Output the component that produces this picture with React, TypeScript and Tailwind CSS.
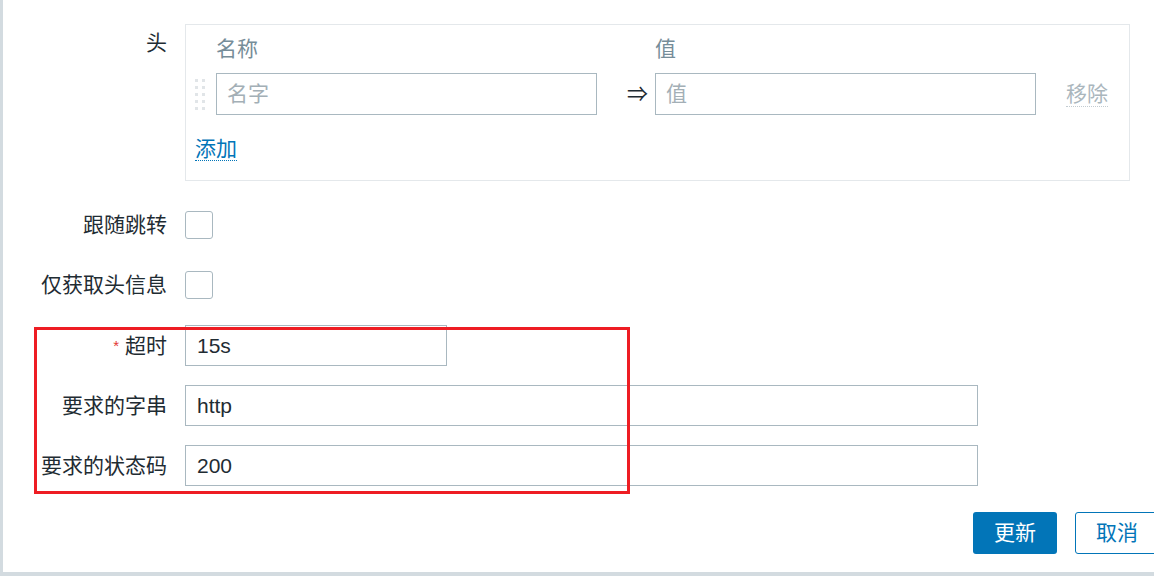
const font = { fontFamily: '"Liberation Sans", "Noto Sans CJK SC", sans-serif' };

function Label({ children, required }: { children: React.ReactNode; required?: boolean }) {
  return (
    <div className="w-[164px] shrink-0 text-right leading-[24px] text-[#1f2c33]">
      {required && <span className="mr-[6px] align-top text-[15px] text-[#e33734]">*</span>}
      {children}
    </div>
  );
}

function TextInput({ value, width }: { value: string; width: string }) {
  return (
    <div className={`${width} flex h-[41px] items-center border border-[#a9b8c0] bg-white px-[11px] text-[#1f2c33]`}>
      {value}
    </div>
  );
}

function Checkbox() {
  return <div className="h-[28px] w-[28px] rounded-[3px] border border-[#a9b8c0] bg-white" />;
}

function DragHandle() {
  return (
    <div className="grid w-[21px] grid-cols-2 content-center gap-x-[3px] gap-y-[4px] pr-[10px]">
      {Array.from({ length: 10 }).map((_, i) => (
        <div key={i} className="h-[3px] w-[3px] bg-[#e1e5e8]" />
      ))}
    </div>
  );
}

export default function App() {
  return (
    <div className="h-[576px] w-[1154px] overflow-hidden bg-[#d3dbe0] pb-[4px] pl-[3px]" style={font}>
      <div className="relative h-full bg-white pt-[24px] text-[21px]">
        {/* headers */}
        <div className="flex">
          <div className="pt-[7px]">
            <Label>头</Label>
          </div>
          <div className="ml-[18px] h-[157px] w-[945px] border border-[#e4e8eb] pl-[9px]">
            <div className="flex h-[48px] items-center text-[#768d99]">
              <div className="w-[21px]" />
              <div className="w-[381px]">名称</div>
              <div className="w-[58px]" />
              <div>值</div>
            </div>
            <div className="flex h-[42px] items-stretch">
              <DragHandle />
              <div className="flex w-[381px] items-center border border-[#a9b8c0] px-[10px] text-[#a3afb6]">名字</div>
              <div className="flex w-[58px] items-center pl-[30px] text-[#1f2c33]">⇒</div>
              <div className="flex w-[381px] items-center border border-[#a9b8c0] px-[10px] text-[#a3afb6]">值</div>
              <div className="ml-[30px] flex items-center">
                <span className="border-b border-dotted border-[#c3ccd1] leading-[24px] text-[#aab6bd]">移除</span>
              </div>
            </div>
            <div className="mt-[18px]">
              <span className="border-b border-dotted border-[#0275b8] leading-[24px] text-[#0275b8]">添加</span>
            </div>
          </div>
        </div>

        {/* checkboxes */}
        <div className="mt-[30px] flex items-center">
          <Label>跟随跳转</Label>
          <div className="ml-[18px]">
            <Checkbox />
          </div>
        </div>
        <div className="mt-[32px] flex items-center">
          <Label>仅获取头信息</Label>
          <div className="ml-[18px]">
            <Checkbox />
          </div>
        </div>

        {/* http fields */}
        <div className="mt-[26px] flex flex-col gap-[19px]">
          <div className="flex items-center">
            <Label required>超时</Label>
            <div className="ml-[18px]">
              <TextInput value="15s" width="w-[262px]" />
            </div>
          </div>
          <div className="flex items-center">
            <Label>要求的字串</Label>
            <div className="ml-[18px]">
              <TextInput value="http" width="w-[793px]" />
            </div>
          </div>
          <div className="flex items-center">
            <Label>要求的状态码</Label>
            <div className="ml-[18px]">
              <TextInput value="200" width="w-[793px]" />
            </div>
          </div>
        </div>

        {/* buttons */}
        <div className="mt-[26px] flex justify-end gap-[18px] -mr-[5px]">
          <button className="h-[42px] w-[84px] rounded-[3px] bg-[#0275b8] text-white">更新</button>
          <button className="h-[42px] w-[84px] rounded-[3px] border border-[#0275b8] bg-white text-[#0275b8]">取消</button>
        </div>

        {/* annotation */}
        <div className="absolute left-[31px] top-[327px] h-[167px] w-[596px] border-[3px] border-[#ee1d23]" />
      </div>
    </div>
  );
}
